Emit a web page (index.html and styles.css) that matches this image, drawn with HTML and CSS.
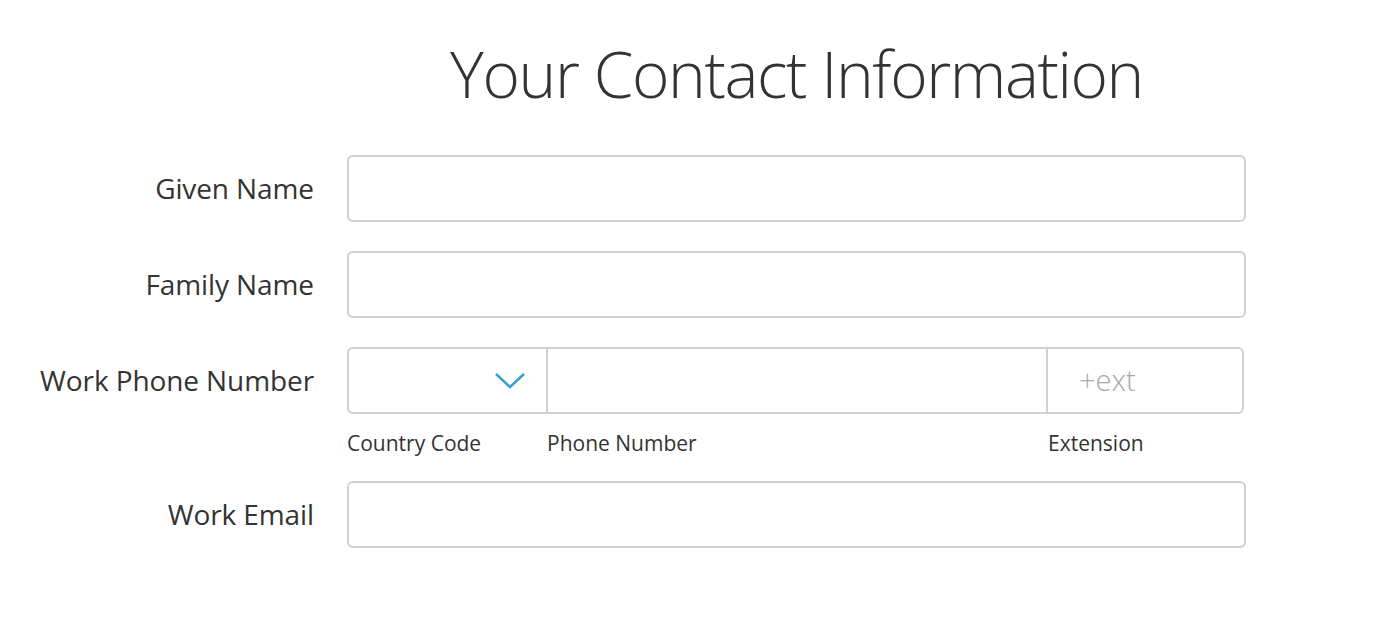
FILE: index.html
```
<!DOCTYPE html>
<html lang="en">
<head>
    <meta charset="UTF-8">
    <title>Your Contact Information</title>
    <link rel="stylesheet" href="styles.css">
</head>
<body>
    <form class="contact-form">
        <div class="spacer"></div>
        <h1 class="title">Your Contact Information</h1>

        <label class="field-label" for="given-name">Given Name</label>
        <input class="text-input" id="given-name" type="text">

        <label class="field-label" for="family-name">Family Name</label>
        <input class="text-input" id="family-name" type="text">

        <label class="field-label" for="phone">Work Phone Number</label>
        <div class="phone-group">
            <div class="phone-box">
                <div class="country-code">
                    <svg class="chevron" width="32" height="18" viewBox="0 0 32 18">
                        <polyline points="2,2 16,15 30,2" fill="none" stroke="#3a9fd1" stroke-width="2.5"/>
                    </svg>
                </div>
                <input class="phone-number" id="phone" type="text">
                <input class="phone-ext" type="text" placeholder="+ext">
            </div>
            <div class="phone-hints">
                <span class="hint hint-country">Country Code</span>
                <span class="hint hint-number">Phone Number</span>
                <span class="hint hint-ext">Extension</span>
            </div>
        </div>

        <label class="field-label" for="email">Work Email</label>
        <input class="text-input" id="email" type="text">
    </form>
</body>
</html>
```

FILE: styles.css
```
body {
    margin: 0;
    background-color: #fff;
    color: #333;
    font-family: "Open Sans", "Noto Sans", Arial, sans-serif;
}
.contact-form {
    display: grid;
    grid-template-columns: 314px 899px;
    column-gap: 33px;
    row-gap: 29px;
    align-items: start;
}
.title {
    margin: 34px 0 12px;
    font-size: 64px;
    font-weight: 300;
    letter-spacing: -1.4px;
    text-align: center;
    line-height: 80px;
    color: #333;
}
.field-label {
    text-align: right;
    font-size: 28px;
    letter-spacing: -0.1px;
    line-height: 67px;
    color: #333;
}
.text-input {
    box-sizing: border-box;
    width: 899px;
    height: 67px;
    margin: 0;
    border: 2px solid #d0d0d0;
    border-radius: 6px;
    background: #fff;
    padding: 0 20px;
    font-size: 24px;
    font-family: inherit;
    outline: none;
}
.phone-group {
    display: flex;
    flex-direction: column;
}
.phone-box {
    box-sizing: border-box;
    display: flex;
    width: 897px;
    height: 67px;
    border: 2px solid #d0d0d0;
    border-radius: 6px;
    overflow: hidden;
}
.country-code {
    flex: none;
    width: 199px;
    display: flex;
    align-items: center;
    justify-content: flex-end;
    padding-right: 20px;
    box-sizing: border-box;
    border-right: 2px solid #d0d0d0;
}
.phone-number,
.phone-ext {
    box-sizing: border-box;
    height: 100%;
    margin: 0;
    border: none;
    outline: none;
    background: transparent;
    font-family: inherit;
    font-size: 29px;
}
.phone-number {
    flex: none;
    width: 500px;
    border-right: 2px solid #d0d0d0;
    padding: 0 20px;
}
.phone-ext {
    flex: 1;
    min-width: 0;
    padding: 0 0 2px 31px;
}
.phone-ext::placeholder {
    color: #a8a8a8;
    font-weight: 300;
}
.phone-hints {
    display: flex;
    margin-top: 20px;
    font-size: 21px;
    line-height: 18px;
    height: 18px;
    color: #333;
}
.hint-country {
    width: 199px;
}
.hint-number {
    width: 500px;
    padding-left: 1px;
}
.hint-ext {
    padding-left: 1px;
}
```
